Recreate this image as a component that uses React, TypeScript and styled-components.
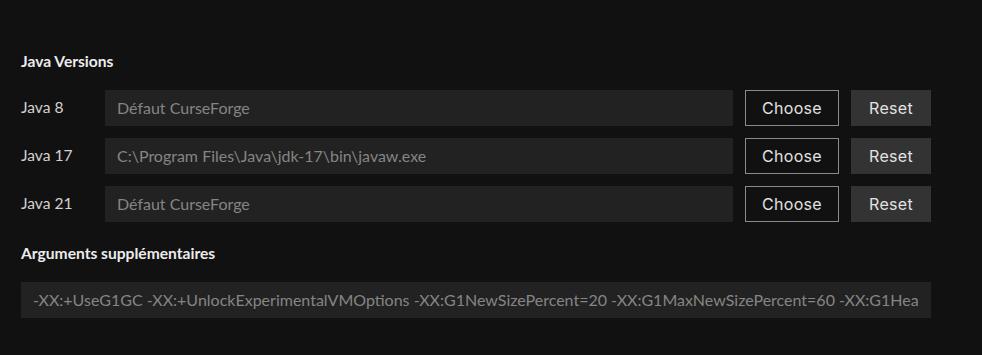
import React from "react";
import styled, { createGlobalStyle } from "styled-components";

const Global = createGlobalStyle`
  html, body { margin: 0; padding: 0; background: #111111; }
  body { font-family: Lato, "Noto Sans", sans-serif; }
`;

const Page = styled.div`
  width: 982px;
  height: 355px;
  box-sizing: border-box;
  background: #111111;
  padding: 51px 51px 0 21px;
  display: flex;
  flex-direction: column;
`;

const SectionTitle = styled.div<{ $top?: number }>`
  font-family: Lato, sans-serif;
  font-weight: 700;
  font-size: 15.6px;
  line-height: 20px;
  color: #ececec;
  margin-top: ${(p) => p.$top ?? 0}px;
  margin-bottom: 19px;
`;

const Rows = styled.div`
  display: flex;
  flex-direction: column;
  gap: 12px;
`;

const Row = styled.div`
  display: flex;
  align-items: center;
  gap: 12px;
  height: 36px;
`;

const Label = styled.div`
  width: 72px;
  font-family: Lato, sans-serif;
  font-size: 15.6px;
  color: #d2d2d2;
  margin-top: -2px;
`;

const Field = styled.div<{ $wide?: boolean }>`
  flex: ${(p) => (p.$wide ? "none" : "1")};
  height: 36px;
  background: #222222;
  color: #858585;
  font-family: Lato, sans-serif;
  font-size: 16px;
  display: flex;
  align-items: center;
  padding: 0 12px 1px;
  box-sizing: border-box;
  min-width: 0;
`;

const FieldText = styled.span`
  flex: 1;
  min-width: 0;
  white-space: nowrap;
  overflow: hidden;
`;

const Button = styled.div<{ $variant: "outline" | "solid" }>`
  height: 36px;
  box-sizing: border-box;
  display: flex;
  align-items: center;
  justify-content: center;
  font-family: Inter, "Open Sans", sans-serif;
  font-weight: 400;
  font-size: 16px;
  letter-spacing: 0.3px;
  color: #e2e2e2;
  width: ${(p) => (p.$variant === "outline" ? 94 : 80)}px;
  background: ${(p) => (p.$variant === "outline" ? "transparent" : "#333333")};
  border: ${(p) => (p.$variant === "outline" ? "1px solid #8a8a8a" : "none")};
`;

const versions = [
  { label: "Java 8", value: "Défaut CurseForge" },
  { label: "Java 17", value: "C:\\Program Files\\Java\\jdk-17\\bin\\javaw.exe" },
  { label: "Java 21", value: "Défaut CurseForge" },
];

export default function App() {
  return (
    <>
      <Global />
      <Page>
        <SectionTitle>Java Versions</SectionTitle>
        <Rows>
          {versions.map((v) => (
            <Row key={v.label}>
              <Label>{v.label}</Label>
              <Field>
                <FieldText>{v.value}</FieldText>
              </Field>
              <Button $variant="outline">Choose</Button>
              <Button $variant="solid">Reset</Button>
            </Row>
          ))}
        </Rows>
        <SectionTitle $top={21}>Arguments supplémentaires</SectionTitle>
        <Field $wide>
          <FieldText>
            -XX:+UseG1GC -XX:+UnlockExperimentalVMOptions -XX:G1NewSizePercent=20 -XX:G1MaxNewSizePercent=60 -XX:G1HeapRegionSize=32M
          </FieldText>
        </Field>
      </Page>
    </>
  );
}
